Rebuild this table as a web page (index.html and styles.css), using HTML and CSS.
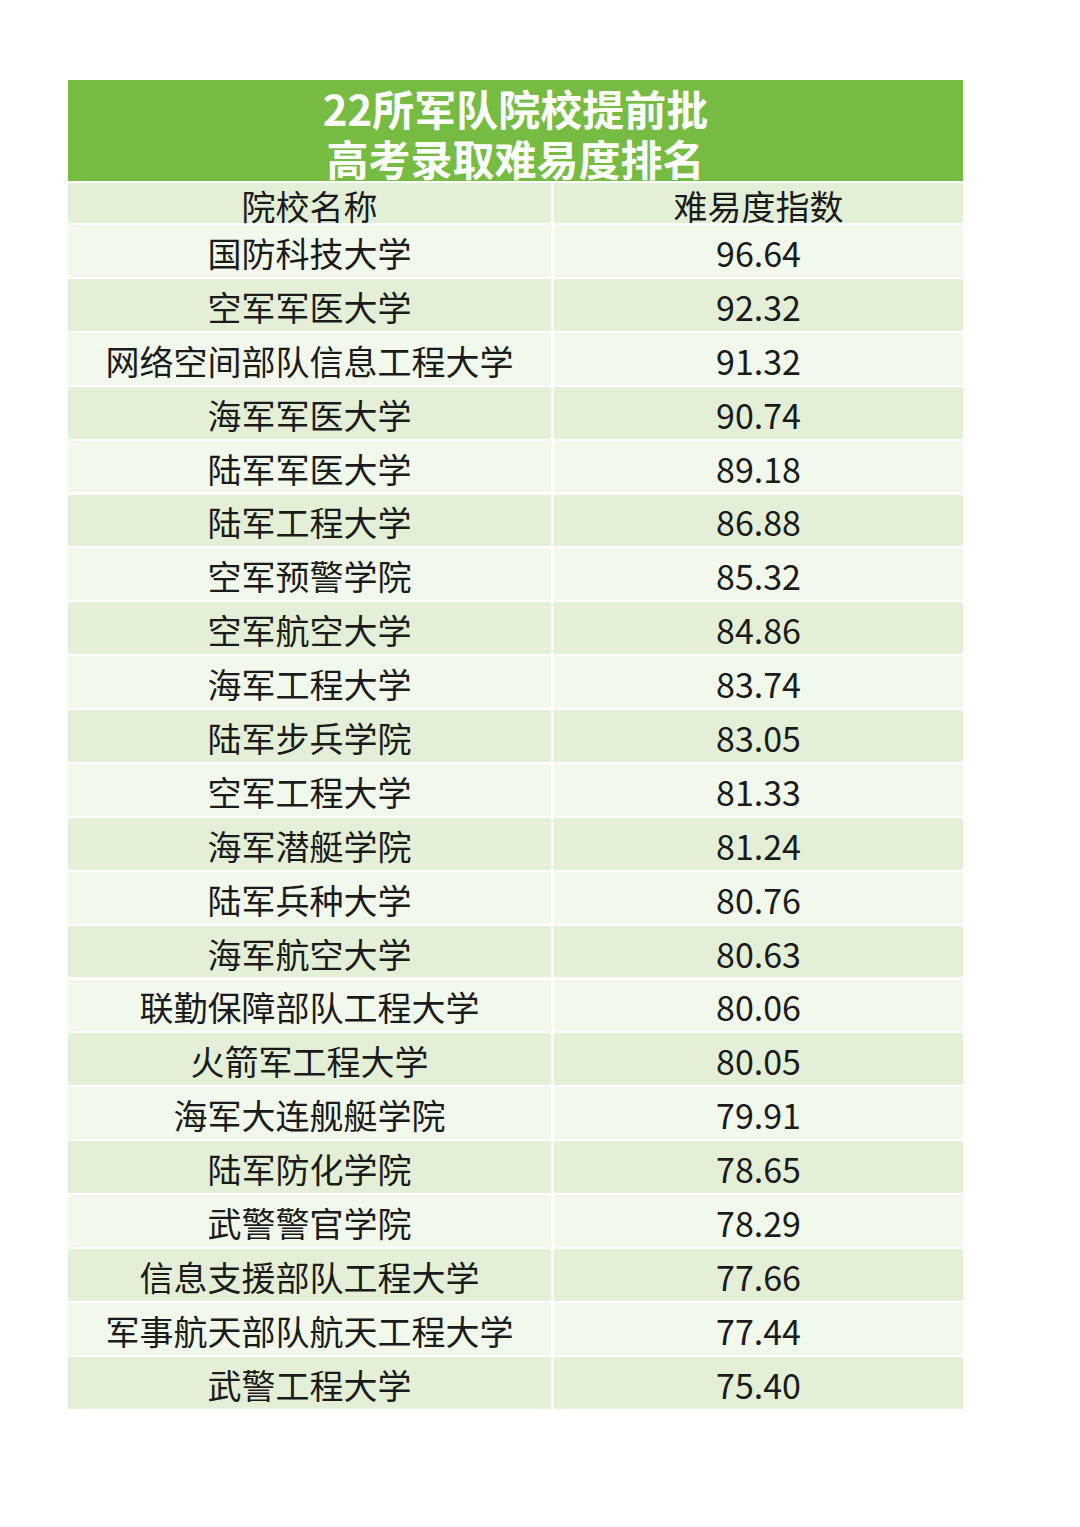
FILE: index.html
```html
<!DOCTYPE html>
<html lang="zh-CN">
<head>
<meta charset="utf-8">
<link rel="stylesheet" href="styles.css">
</head>
<body>
<div class="page">
  <div class="table">
    <div class="title">22所军队院校提前批<br>高考录取难易度排名</div>
    <div class="grid">
      <div class="row head dark"><div class="c">院校名称</div><div class="c">难易度指数</div></div>
      <div class="row light"><div class="c">国防科技大学</div><div class="c">96.64</div></div>
      <div class="row dark"><div class="c">空军军医大学</div><div class="c">92.32</div></div>
      <div class="row light"><div class="c">网络空间部队信息工程大学</div><div class="c">91.32</div></div>
      <div class="row dark"><div class="c">海军军医大学</div><div class="c">90.74</div></div>
      <div class="row light"><div class="c">陆军军医大学</div><div class="c">89.18</div></div>
      <div class="row dark"><div class="c">陆军工程大学</div><div class="c">86.88</div></div>
      <div class="row light"><div class="c">空军预警学院</div><div class="c">85.32</div></div>
      <div class="row dark"><div class="c">空军航空大学</div><div class="c">84.86</div></div>
      <div class="row light"><div class="c">海军工程大学</div><div class="c">83.74</div></div>
      <div class="row dark"><div class="c">陆军步兵学院</div><div class="c">83.05</div></div>
      <div class="row light"><div class="c">空军工程大学</div><div class="c">81.33</div></div>
      <div class="row dark"><div class="c">海军潜艇学院</div><div class="c">81.24</div></div>
      <div class="row light"><div class="c">陆军兵种大学</div><div class="c">80.76</div></div>
      <div class="row dark"><div class="c">海军航空大学</div><div class="c">80.63</div></div>
      <div class="row light"><div class="c">联勤保障部队工程大学</div><div class="c">80.06</div></div>
      <div class="row dark"><div class="c">火箭军工程大学</div><div class="c">80.05</div></div>
      <div class="row light"><div class="c">海军大连舰艇学院</div><div class="c">79.91</div></div>
      <div class="row dark"><div class="c">陆军防化学院</div><div class="c">78.65</div></div>
      <div class="row light"><div class="c">武警警官学院</div><div class="c">78.29</div></div>
      <div class="row dark"><div class="c">信息支援部队工程大学</div><div class="c">77.66</div></div>
      <div class="row light"><div class="c">军事航天部队航天工程大学</div><div class="c">77.44</div></div>
      <div class="row dark"><div class="c">武警工程大学</div><div class="c">75.40</div></div>
    </div>
  </div>
</div>
</body>
</html>
```

FILE: styles.css
```css
html, body {
  margin: 0;
  padding: 0;
  background: #ffffff;
}
body {
  font-family: "Noto Sans CJK SC", "Noto Sans", sans-serif;
  color: #1b1b1b;
}
.page {
  width: 1080px;
  height: 1527px;
  padding-top: 80px;
  padding-left: 68px;
  box-sizing: border-box;
}
.table {
  width: 895px;
  display: flex;
  flex-direction: column;
  gap: 2px;
}
.title {
  height: 101px;
  background: #76bb42;
  color: #ffffff;
  font-weight: 700;
  font-size: 42px;
  line-height: 50px;
  text-align: center;
  box-sizing: border-box;
  padding-top: 3px;
  overflow: hidden;
}
.grid {
  display: flex;
  flex-direction: column;
  gap: 2.1px;
}
.row {
  display: grid;
  grid-template-columns: 483px 409px;
  column-gap: 3px;
  height: 51.8px;
}
.row.head {
  height: 40px;
}
.c {
  display: flex;
  align-items: center;
  justify-content: center;
  font-size: 34px;
  line-height: 1;
  white-space: nowrap;
  padding-top: 4px;
  box-sizing: border-box;
}
.row.head .c {
  padding-top: 6px;
}
.row.dark .c {
  background: #e3f0d7;
}
.row.light .c {
  background: #f1f8ec;
}
```
